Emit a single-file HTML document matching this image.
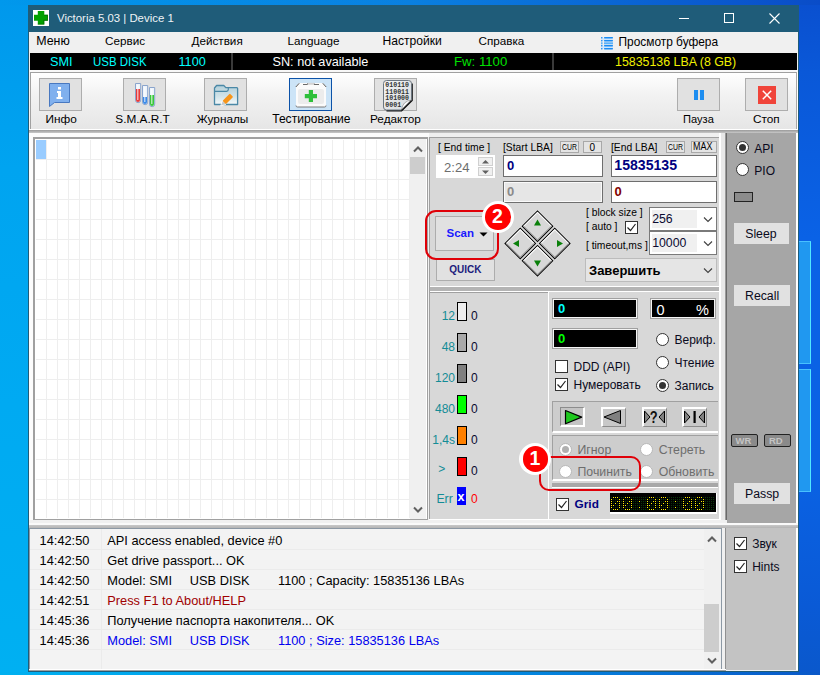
<!DOCTYPE html>
<html><head><meta charset="utf-8">
<style>
*{box-sizing:border-box;margin:0;padding:0}
html,body{width:820px;height:675px;overflow:hidden}
body{position:relative;font-family:"Liberation Sans",sans-serif;background:linear-gradient(180deg,rgba(0,10,60,0.07) 0%,rgba(0,10,60,0) 50%,rgba(255,255,255,0.03) 100%),linear-gradient(90deg,#00a6f0 0%,#0a8ce4 50%,#0a5ad6 97%,#0a52cc 100%)}
.a{position:absolute}
.t{position:absolute;white-space:pre;line-height:1}
#desk-b{left:0;top:0;width:820px;height:675px;background:linear-gradient(180deg,rgba(0,0,0,0) 0%,rgba(0,0,0,0) 100%)}
.logo{position:absolute;background:#2098f0;border:1px solid #48c0ff;border-right:1px solid #50e8ff}
#win{left:28px;top:5px;width:771px;height:667px;background:#1f5c79}
#client{left:29px;top:32px;width:769px;height:639px;background:#f0f0f0}
.btn{position:absolute;background:#e1e1e1;border:1px solid #adadad}
.blk{position:absolute;background:#000}
</style></head><body>
<!-- desktop -->
<div class="a" style="left:0;top:0;width:28px;height:675px;background:linear-gradient(180deg,#0098ec 0%,#00a4f0 25%,#00aaf2 60%,#00b0f2 100%)"></div>
<div class="a" style="left:0;top:0;width:820px;height:5px;background:linear-gradient(90deg,#0098ec 0%,#0a80e0 50%,#0a4cc8 100%)"></div>
<div class="a" style="left:0;top:672px;width:820px;height:3px;background:linear-gradient(90deg,#00b0f0 0%,#0098e8 50%,#0a58c8 100%)"></div>
<div class="a" style="left:798px;top:5px;width:22px;height:667px;background:linear-gradient(180deg,#0a50d0 0%,#0a58d8 10%,#0a62e6 35%,#0a62e4 70%,#0a5ad6 90%,#0a58cc 100%)"></div>
<!-- desktop logo panels -->
<div class="logo" style="left:798px;top:241px;width:13px;height:123px"></div>
<div class="logo" style="left:798px;top:369px;width:13px;height:123px"></div>

<div id="win" class="a"></div>
<!-- title bar -->
<div class="a" style="left:33px;top:10px;width:16px;height:16px;background:#fff"></div>
<svg class="a" style="left:33px;top:10px" width="16" height="16" viewBox="0 0 16 16"><path d="M4.8 1h6.5v3.8h3.6v5.9h-3.6v3.9H4.8v-3.9H1V4.8h3.8z" fill="#00a000"/><path d="M11.3 4.8h3.6v5.9h-3.6v3.9H4.8v-0.9h5.6v-3.9h3.6V5.7h-2.7z" fill="#006000" opacity=".7"/></svg>
<div class="t" style="left:57px;top:13px;font-size:11.4px;color:#eef3f6">Victoria 5.03 | Device 1</div>
<div class="a" style="left:679px;top:18px;width:10px;height:1px;background:#fff"></div>
<div class="a" style="left:724px;top:13px;width:10px;height:10px;border:1px solid #fff"></div>
<svg class="a" style="left:769px;top:13px" width="11" height="11" viewBox="0 0 11 11"><path d="M0.5 0.5L10.5 10.5M10.5 0.5L0.5 10.5" stroke="#fff" stroke-width="1.1"/></svg>

<div id="client" class="a"></div>
<!-- menu -->
<div class="t" style="left:36.2px;top:34.5px;font-size:12.4px;color:#000">Меню</div>
<div class="t" style="left:105px;top:35.1px;font-size:11.7px;color:#000">Сервис</div>
<div class="t" style="left:191.5px;top:35.1px;font-size:11.7px;color:#000">Действия</div>
<div class="t" style="left:287.5px;top:35.1px;font-size:11.7px;color:#000">Language</div>
<div class="t" style="left:382.5px;top:34.9px;font-size:12.1px;color:#000">Настройки</div>
<div class="t" style="left:478.5px;top:35.1px;font-size:11.7px;color:#000">Справка</div>
<svg class="a" style="left:600px;top:36px" width="14" height="14" viewBox="0 0 14 14"><g fill="#cfe6fc"><rect x="1" y="2" width="12" height="2.5"/><rect x="1" y="10" width="12" height="2.5"/></g><g fill="#1a8cf4"><rect x="1" y="1" width="1.6" height="1.4" rx=".6"/><rect x="4" y="1" width="9" height="1.4" rx=".6"/><rect x="1" y="4" width="1.6" height="1.4" rx=".6"/><rect x="4" y="4" width="9" height="1.4" rx=".6"/><rect x="1" y="9" width="1.6" height="1.4" rx=".6"/><rect x="4" y="9" width="9" height="1.4" rx=".6"/><rect x="1" y="12" width="1.6" height="1.4" rx=".6"/><rect x="4" y="12" width="9" height="1.4" rx=".6"/></g><g fill="#5cb2fa"><rect x="1" y="6.3" width="1.6" height="2"/><rect x="4" y="6.3" width="9" height="2"/></g></svg>
<div class="t" style="left:618.5px;top:36.9px;font-size:11.9px;color:#000">Просмотр буфера</div>
<!-- info bar -->
<div class="blk" style="left:30px;top:53px;width:767px;height:17px"></div>
<div class="a" style="left:231px;top:53px;width:2px;height:17px;background:#3a3a3a"></div>
<div class="a" style="left:552px;top:53px;width:2px;height:17px;background:#3a3a3a"></div>
<div class="t" style="left:50px;top:56px;font-size:12.7px;color:#00ffff">SMI</div>
<div class="t" style="left:92.5px;top:56px;font-size:12.7px;color:#00ffff;display:inline-block;transform:scaleX(0.905);transform-origin:0 0">USB DISK</div>
<div class="t" style="left:178.5px;top:56px;font-size:12.7px;color:#00ffff">1100</div>
<div class="t" style="left:272.5px;top:56px;font-size:12.7px;color:#fff">SN: not available</div>
<div class="t" style="left:454px;top:54.8px;font-size:13.2px;color:#00e000">Fw: 1100</div>
<div class="t" style="left:615px;top:56.2px;font-size:12.4px;color:#f0f000">15835136 LBA (8 GB)</div>
<!-- toolbar -->
<div class="a" style="left:29px;top:70px;width:769px;height:2px;background:#f8f8f8"></div>
<div class="a" style="left:29px;top:72px;width:769px;height:1px;background:#a0a0a0"></div>
<div class="a" style="left:30px;top:73px;width:767px;height:56px;background:linear-gradient(180deg,#ffffff 0%,#f2f2f2 40%,#e6e6e6 100%);border-left:1px solid #fff"></div>
<div class="a" style="left:29px;top:72px;width:1px;height:57px;background:#f4f4f4"></div><div class="a" style="left:30px;top:72px;width:1px;height:57px;background:#a0a0a0"></div>
<div class="a" style="left:796px;top:72px;width:1px;height:58px;background:#a8a8a8"></div>
<div class="a" style="left:797px;top:72px;width:1px;height:58px;background:#fff"></div>
<div class="a" style="left:29px;top:129px;width:769px;height:1px;background:#fff"></div>
<div class="a" style="left:29px;top:130px;width:769px;height:3px;background:linear-gradient(180deg,#9a9a9a,#c8c8c8)"></div>

<div class="btn" style="left:39px;top:78px;width:43px;height:33px"></div>
<div class="btn" style="left:123px;top:78px;width:43px;height:33px"></div>
<div class="btn" style="left:204px;top:78px;width:43px;height:33px"></div>
<div class="btn" style="left:289px;top:78px;width:43px;height:33px;background:#cce4f7;border:1px solid #0b52a8"></div>
<div class="btn" style="left:374px;top:78px;width:43px;height:33px"></div>
<div class="btn" style="left:677px;top:78px;width:43px;height:33px"></div>
<div class="btn" style="left:745px;top:78px;width:43px;height:33px"></div>

<div class="t" style="left:45.6px;top:113.7px;font-size:11.8px;color:#000">Инфо</div>
<div class="t" style="left:115.3px;top:113.7px;font-size:11.8px;color:#000">S.M.A.R.T</div>
<div class="t" style="left:196.8px;top:113.7px;font-size:11.8px;color:#000">Журналы</div>
<div class="t" style="left:272.2px;top:113.45px;font-size:12.1px;color:#000">Тестирование</div>
<div class="t" style="left:370px;top:113.7px;font-size:11.8px;color:#000">Редактор</div>
<div class="t" style="left:683px;top:114.3px;font-size:11.1px;color:#000">Пауза</div>
<div class="t" style="left:753px;top:113.7px;font-size:11.8px;color:#000">Стоп</div>
<!--ICONS-->
<svg class="a" style="left:48px;top:82px" width="24" height="25" viewBox="0 0 24 25"><path d="M1.5 1.5h20v19h-15l-5 4z" fill="#80b0ee" stroke="#4878c0" stroke-width="1"/><rect x="10" y="5" width="3" height="2.5" fill="#fff"/><path d="M9 9h4v6h1.5v2h-6v-2H10v-4H9z" fill="#fff"/></svg>
<svg class="a" style="left:134px;top:82px" width="22" height="26" viewBox="0 0 22 26"><g stroke="#8aa4cc" stroke-width="1"><path d="M1.5 1.5h5.2v16.6a2.6 2.6 0 0 1-5.2 0z" fill="#eef4fb"/><path d="M8.5 3.5h5.2v16.6a2.6 2.6 0 0 1-5.2 0z" fill="#eef4fb"/><path d="M15.5 5.5h5.2v16.6a2.6 2.6 0 0 1-5.2 0z" fill="#eef4fb"/></g><path d="M2 7h4v11a2 2 0 0 1-4 0z" fill="#e83a3a"/><path d="M9 15h4v5a2 2 0 0 1-4 0z" fill="#3a8ae8"/><path d="M16 13h4v9a2 2 0 0 1-4 0z" fill="#3ac83a"/><rect x="3" y="3" width="1.5" height="15" fill="#fff" opacity=".6"/><rect x="10" y="5" width="1.5" height="15" fill="#fff" opacity=".6"/><rect x="17" y="7" width="1.5" height="15" fill="#fff" opacity=".6"/></svg>
<svg class="a" style="left:213px;top:84px" width="26" height="25" viewBox="0 0 26 25"><defs><linearGradient id="fdg" x1="0" y1="0" x2="0" y2="1"><stop offset="0" stop-color="#b4d0da"/><stop offset="0.55" stop-color="#cfe2e8"/><stop offset="1" stop-color="#f4f9fa"/></linearGradient></defs><path d="M1.5 20.5V4L3.6 1.5H10.8L12.8 3.6H24L24.6 4.4V20.5Z" fill="url(#fdg)" stroke="#4a88a6" stroke-width="1.3" stroke-linejoin="round"/><path d="M1.5 7.3H13.6Q15.3 7.3 15.3 5.6V3.6" fill="none" stroke="#4a88a6" stroke-width="1.2"/><g transform="translate(13.6,16.1) rotate(-45)"><rect x="-3.5" y="-2.4" width="10.5" height="4.8" rx="1" fill="#f7951a"/><path d="M-3.5 -2.4L-7.8 0L-3.5 2.4z" fill="#c8c8c8"/><path d="M-3.5 -2.6L-8.3 0L-3.5 2.6" fill="none" stroke="#fff" stroke-width=".8"/></g></svg>
<svg class="a" style="left:295px;top:82px" width="32" height="26" viewBox="0 0 32 26"><path d="M4 1h24l3 3v20l-1 1H2l-1-1V4z" fill="#fbfbfb"/><rect x="3" y="7" width="26" height="15" rx="2" fill="#ececec"/><path d="M0.8 5L4.2 1.3M31.2 5L27.8 1.3" stroke="#555" stroke-width="1"/><path d="M8 2.5h4.6V1.2M19 1.2v1.3h5" fill="none" stroke="#6a6a6a" stroke-width="1"/><rect x="12.8" y="0.8" width="6" height="2" fill="#d4d4d4"/><path d="M1 23.5q0 1.5 1.5 1.5h27q1.5 0 1.5-1.5" fill="none" stroke="#7a7a7a" stroke-width="1"/><path d="M13.8 8h4.2v4h4v4.2h-4v3.8h-4.2v-3.8h-4V12h4z" fill="#2fc03a"/></svg>
<svg class="a" style="left:381px;top:79px" width="34" height="34" viewBox="0 0 34 34"><defs><linearGradient id="edg" x1="0" y1="0" x2="1" y2="1"><stop offset="0" stop-color="#f4f4f4"/><stop offset="1" stop-color="#d4d8dc"/></linearGradient></defs><path d="M31 4.5v17L20.5 31.8H5.5" fill="none" stroke="#111" stroke-width="1.6"/><path d="M5.5 1.5h22q3 0 3 3v16.5l-10 10h-15q-3 0-3-3v-23.5q0-3 3-3z" fill="url(#edg)" stroke="#6c7680" stroke-width="1"/><g font-family="Liberation Mono" font-weight="bold" font-size="6.6" fill="#333"><text x="4.3" y="8.3">010110</text><text x="4.3" y="14.7">110011</text><text x="4.3" y="21.1">101000</text><text x="4.3" y="27.5">0001</text></g><path d="M20.5 31q1-9 10-10" fill="#fafafa" stroke="#9a9a9a" stroke-width=".8"/><path d="M20.5 31.5l10-10" stroke="#222" stroke-width="1.2"/></svg>
<div class="a" style="left:694px;top:90px;width:4px;height:10px;background:#1e8ef0"></div>
<div class="a" style="left:700px;top:90px;width:4px;height:10px;background:#1e8ef0"></div>
<div class="a" style="left:758px;top:86px;width:18px;height:18px;background:#f0443a"></div>
<svg class="a" style="left:758px;top:86px" width="18" height="18" viewBox="0 0 18 18"><path d="M4.8 4.8l8.4 8.4M13.2 4.8l-8.4 8.4" stroke="#fff" stroke-width="1.5"/></svg>
<!--MAIN-->
<!-- graph -->
<div class="a" style="left:29px;top:133px;width:400px;height:4px;background:#fcfcfc"></div>
<div class="a" style="left:29px;top:133px;width:4px;height:390px;background:#fcfcfc"></div>
<div class="a" style="left:33px;top:137px;width:395px;height:383px;background:#fff;border-top:2px solid #a0a0a0;border-left:2px solid #a0a0a0;border-right:1px solid #a0a0a0;border-bottom:1px solid #a0a0a0"></div>
<div class="a" style="left:36px;top:140px;width:374px;height:378px;background-color:#fff;background-image:repeating-linear-gradient(90deg,transparent 0,transparent 10px,#eeeeee 10px,#eeeeee 11px),repeating-linear-gradient(180deg,transparent 0,transparent 19px,#eeeeee 19px,#eeeeee 20px)"></div>
<div class="a" style="left:36px;top:140px;width:10px;height:19px;background:#99ccff"></div>
<div class="a" style="left:410px;top:139px;width:16px;height:380px;background:#f0f0f0"></div>
<div class="a" style="left:410px;top:157px;width:15px;height:17px;background:#cdcdcd"></div>
<svg class="a" style="left:413px;top:145px" width="10" height="8" viewBox="0 0 10 8"><path d="M1 6.5L5 2.5L9 6.5" fill="none" stroke="#606060" stroke-width="2"/></svg>
<svg class="a" style="left:413px;top:506px" width="10" height="8" viewBox="0 0 10 8"><path d="M1 1.5L5 5.5L9 1.5" fill="none" stroke="#606060" stroke-width="2"/></svg>
<!-- middle column -->
<div class="a" style="left:429px;top:137px;width:290px;height:382px;background:#d8d8d8;border-top:1px solid #a0a0a0;border-left:1px solid #a0a0a0"></div>
<div class="a" style="left:429px;top:519px;width:292px;height:1px;background:#fff"></div>
<div class="a" style="left:719px;top:133px;width:2px;height:390px;background:#fff"></div>
<div class="a" style="left:721px;top:133px;width:4px;height:390px;background:#e8e8e8"></div>
<div class="a" style="left:725px;top:133px;width:1px;height:390px;background:#9a9a9a"></div>
<div class="a" style="left:726px;top:133px;width:1px;height:390px;background:#6a6a6a"></div>
<div class="a" style="left:430px;top:286px;width:289px;height:1px;background:#fff"></div>
<div class="a" style="left:430px;top:287px;width:289px;height:4px;background:#b4b4b4"></div>
<div class="a" style="left:430px;top:291px;width:289px;height:1px;background:#fff"></div>
<div class="a" style="left:430px;top:292px;width:118px;height:1px;background:#a0a0a0"></div>
<div class="a" style="left:548px;top:292px;width:1px;height:228px;background:#fff"></div>

<div class="t" style="left:438px;top:143.2px;font-size:10.3px;color:#000">[ End time ]</div>
<div class="a" style="left:436px;top:155px;width:59px;height:23px;background:#fff"></div>
<div class="t" style="left:444px;top:161.4px;font-size:13.1px;color:#6d6d6d">2:24</div>
<div class="a" style="left:478px;top:157px;width:15px;height:9px;background:#f0f0f0;border:1px solid #d0d0d0"></div>
<div class="a" style="left:478px;top:167px;width:15px;height:9px;background:#f0f0f0;border:1px solid #d0d0d0"></div>
<svg class="a" style="left:481px;top:159px" width="9" height="16" viewBox="0 0 9 16"><path d="M1 4.5h7L4.5 1z" fill="#606060"/><path d="M1 11.5h7L4.5 15z" fill="#606060"/></svg>

<div class="t" style="left:503px;top:143.2px;font-size:10.3px;color:#000">[Start LBA]</div>
<div class="a" style="left:560px;top:141px;width:19px;height:12px;background:#e4e4e4;border:1px solid #a8a8a8"></div>
<div class="t" style="left:561.8px;top:143.4px;font-size:8.6px;color:#000;transform:scaleX(0.8);transform-origin:0 0">CUR</div>
<div class="a" style="left:583px;top:141px;width:19px;height:12px;background:#e4e4e4;border:1px solid #a8a8a8"></div>
<div class="t" style="left:589.6px;top:142.6px;font-size:10px;color:#000">0</div>
<div class="t" style="left:611px;top:143.2px;font-size:10.3px;color:#000">[End LBA]</div>
<div class="a" style="left:666px;top:141px;width:19px;height:12px;background:#e4e4e4;border:1px solid #a8a8a8"></div>
<div class="t" style="left:667.8px;top:143.4px;font-size:8.6px;color:#000;transform:scaleX(0.8);transform-origin:0 0">CUR</div>
<div class="a" style="left:691px;top:141px;width:26px;height:12px;background:#e4e4e4;border:1px solid #a8a8a8"></div>
<div class="t" style="left:693.3px;top:142.4px;font-size:10.4px;color:#000;transform:scaleX(0.86);transform-origin:0 0">MAX</div>

<div class="a" style="left:503px;top:155px;width:100px;height:22px;background:#fff;border:1px solid #6e6e6e"></div>
<div class="t" style="left:507px;top:159px;font-size:13px;font-weight:bold;color:#000080">0</div>
<div class="a" style="left:611px;top:155px;width:106px;height:22px;background:#fff;border:1px solid #6e6e6e"></div>
<div class="t" style="left:614.3px;top:158.3px;font-size:14.1px;font-weight:bold;color:#000080">15835135</div>
<div class="a" style="left:503px;top:181px;width:100px;height:22px;background:#e6e6e6;border:1px solid #6e6e6e;box-shadow:inset 0 0 0 1px #fafafa"></div>
<div class="t" style="left:507px;top:185.4px;font-size:13px;font-weight:bold;color:#8a8a8a">0</div>
<div class="a" style="left:611px;top:181px;width:106px;height:22px;background:#fff;border:1px solid #6e6e6e"></div>
<div class="t" style="left:614.5px;top:185.4px;font-size:13px;font-weight:bold;color:#800000">0</div>

<div class="btn" style="left:435px;top:216px;width:59px;height:35px"></div>
<div class="t" style="left:446.5px;top:228.3px;font-size:11.5px;font-weight:bold;color:#1a1aff">Scan</div>
<svg class="a" style="left:479px;top:232px" width="9" height="5" viewBox="0 0 9 5"><path d="M0.5 0.5h8L4.5 4.5z" fill="#000"/></svg>
<div class="btn" style="left:436px;top:259px;width:59px;height:22px"></div>
<div class="t" style="left:449.3px;top:265.1px;font-size:10px;font-weight:bold;color:#1c1c7c">QUICK</div>
<svg class="a" style="left:500px;top:206px" width="76" height="76" viewBox="0 0 76 76">
<g transform="translate(37.5,37.5) rotate(45)">
<g stroke="#000" stroke-width="1" fill="#d8d8d8">
<rect x="-23" y="-23" width="21.6" height="21.6"/><rect x="1.4" y="-23" width="21.6" height="21.6"/><rect x="-23" y="1.4" width="21.6" height="21.6"/><rect x="1.4" y="1.4" width="21.6" height="21.6"/>
</g>
<g stroke="#fff" stroke-width="1" fill="none">
<path d="M-22 -2.4V-22H-2.4"/><path d="M2.4 -2.4V-22H22"/><path d="M-22 22V2.4H-2.4"/><path d="M2.4 22V2.4H22"/>
</g>
<g stroke="#909090" stroke-width="1" fill="none">
<path d="M-2.4 -22V-2.4H-22"/><path d="M22 -22V-2.4H2.4"/><path d="M-2.4 2.4V22H-22"/><path d="M22 2.4V22H2.4"/>
</g>
</g>
<g fill="#0a800a"><path d="M37.5 13.5l3.5 6h-7z"/><path d="M13 37.5l6-3.5v7z"/><path d="M63 37.5l-6-3.5v7z"/><path d="M37.5 60.5l3.5-6h-7z"/></g>
</svg>
<!-- annotation 2 -->
<div class="a" style="left:424.8px;top:210px;width:74px;height:49.5px;border:2px solid #e00008;border-radius:11px"></div>
<div class="a" style="left:482px;top:201px;width:32px;height:32px;border-radius:50%;background:#fff"></div>
<div class="a" style="left:485.25px;top:204.25px;width:25.5px;height:25.5px;border-radius:50%;background:#ff0000"></div>
<div class="t" style="left:492px;top:207.2px;font-size:19.5px;font-weight:bold;color:#fff">2</div>

<div class="t" style="left:586px;top:208.3px;font-size:10.3px;color:#000">[ block size ]</div>
<div class="t" style="left:586px;top:222.3px;font-size:10.3px;color:#000">[ auto ]</div>
<div class="t" style="left:586px;top:240.8px;font-size:10.3px;color:#000">[ timeout,ms ]</div>
<div class="a" style="left:625px;top:221px;width:13px;height:13px;background:#fff;border:1px solid #333"></div>
<svg class="a" style="left:625px;top:221px" width="13" height="13" viewBox="0 0 13 13"><path d="M2.5 6.5l3 3 5-6.5" fill="none" stroke="#222" stroke-width="1.2"/></svg>
<div class="a" style="left:649px;top:207px;width:68px;height:24px;background:#fff;border:1px solid #7a7a7a"></div>
<div class="a" style="left:652px;top:210px;width:45px;height:18px;background:#f0f0f0"></div>
<div class="t" style="left:652.2px;top:212.5px;font-size:12.3px;color:#0a0a30">256</div>
<svg class="a" style="left:703px;top:216px" width="10" height="7" viewBox="0 0 10 7"><path d="M1 1.5l4 4 4-4" fill="none" stroke="#404040" stroke-width="1.1"/></svg>
<div class="a" style="left:649px;top:231px;width:68px;height:24px;background:#fff;border:1px solid #7a7a7a"></div>
<div class="a" style="left:652px;top:234px;width:45px;height:18px;background:#f0f0f0"></div>
<div class="t" style="left:652.2px;top:237px;font-size:12.3px;color:#0a0a30">10000</div>
<svg class="a" style="left:703px;top:240px" width="10" height="7" viewBox="0 0 10 7"><path d="M1 1.5l4 4 4-4" fill="none" stroke="#404040" stroke-width="1.1"/></svg>
<div class="a" style="left:585px;top:258px;width:132px;height:24px;background:#e5e5e5;border:1px solid #bcbcbc"></div>
<div class="t" style="left:589px;top:264.2px;font-size:13px;font-weight:bold;color:#000">Завершить</div>
<svg class="a" style="left:703px;top:267px" width="10" height="7" viewBox="0 0 10 7"><path d="M1 1.5l4 4 4-4" fill="none" stroke="#404040" stroke-width="1.1"/></svg>
<!--LOWER-->
<div class="a" style="left:457px;top:302px;width:10px;height:19px;background:#eeeeee;border:1px solid #000"></div>
<div class="t" style="right:365px;top:309.84px;font-size:12px;color:#138c96">12</div>
<div class="t" style="left:471px;top:309.84px;font-size:12px;color:#0a0a30">0</div>
<div class="a" style="left:457px;top:333px;width:10px;height:19px;background:#a9a9a9;border:1px solid #000"></div>
<div class="t" style="right:365px;top:340.84px;font-size:12px;color:#138c96">48</div>
<div class="t" style="left:471px;top:340.84px;font-size:12px;color:#0a0a30">0</div>
<div class="a" style="left:457px;top:364px;width:10px;height:19px;background:#808080;border:1px solid #000"></div>
<div class="t" style="right:365px;top:371.84px;font-size:12px;color:#138c96">120</div>
<div class="t" style="left:471px;top:371.84px;font-size:12px;color:#0a0a30">0</div>
<div class="a" style="left:457px;top:395px;width:10px;height:19px;background:#00ff00;border:1px solid #000"></div>
<div class="t" style="right:365px;top:402.84px;font-size:12px;color:#138c96">480</div>
<div class="t" style="left:471px;top:402.84px;font-size:12px;color:#0a0a30">0</div>
<div class="a" style="left:457px;top:426px;width:10px;height:19px;background:#ff8000;border:1px solid #000"></div>
<div class="t" style="right:365px;top:433.84px;font-size:12px;color:#138c96">1,4s</div>
<div class="t" style="left:471px;top:433.84px;font-size:12px;color:#0a0a30">0</div>
<div class="a" style="left:457px;top:457px;width:10px;height:19px;background:#ff0000;border:1px solid #000"></div>
<div class="t" style="left:438.3px;top:463.3px;font-size:12px;color:#138c96">&gt;</div>
<div class="t" style="left:471px;top:464.84px;font-size:12px;color:#0a0a30">0</div>
<div class="a" style="left:457px;top:487px;width:9px;height:18px;background:#0000ff"></div>
<div class="t" style="left:457.5px;top:491.42px;font-size:12.5px;font-weight:bold;color:#fff">x</div>
<div class="t" style="left:436.4px;top:492.6px;font-size:12.3px;color:#138c96">Err</div>
<div class="t" style="left:471px;top:492.84px;font-size:12px;color:#ff0000">0</div>
<div class="a" style="left:552px;top:298px;width:86px;height:21px;background:#000;border:1px solid #a0a0a0;box-shadow:inset 0 0 0 1px #f4f4f4"></div>
<div class="t" style="left:558px;top:302.0px;font-size:13px;font-weight:bold;color:#00ffff">0</div>
<div class="a" style="left:650px;top:298px;width:66px;height:21px;background:#000;border:1px solid #a0a0a0;box-shadow:inset 0 0 0 1px #f4f4f4"></div>
<div class="t" style="left:656.5px;top:302.73px;font-size:14.5px;color:#fff">0</div>
<div class="t" style="left:696px;top:302.73px;font-size:14.5px;color:#fff">%</div>
<div class="a" style="left:552px;top:328px;width:86px;height:21px;background:#000;border:1px solid #a0a0a0;box-shadow:inset 0 0 0 1px #f4f4f4"></div>
<div class="t" style="left:558px;top:332.0px;font-size:13px;font-weight:bold;color:#00ff00">0</div>
<div class="a" style="left:555px;top:360px;width:13px;height:13px;background:#fff;border:1px solid #333"></div>
<div class="t" style="left:573.5px;top:361.24px;font-size:12px;color:#0a0a20">DDD (API)</div>
<div class="a" style="left:555px;top:378px;width:13px;height:13px;background:#fff;border:1px solid #333"></div><svg class="a" style="left:555px;top:378px" width="13" height="13" viewBox="0 0 13 13"><path d="M2.5 6.5l3 3 5-6.5" fill="none" stroke="#222" stroke-width="1.2"/></svg>
<div class="t" style="left:573.5px;top:379.14px;font-size:12px;color:#0a0a20">Нумеровать</div>
<div class="a" style="left:656px;top:333px;width:13px;height:13px;border-radius:50%;background:#fff;border:1px solid #333"></div>
<div class="t" style="left:674.5px;top:333.84px;font-size:12px;color:#0a0a20">Вериф.</div>
<div class="a" style="left:656px;top:356px;width:13px;height:13px;border-radius:50%;background:#fff;border:1px solid #333"></div>
<div class="t" style="left:674.5px;top:356.84px;font-size:12px;color:#0a0a20">Чтение</div>
<div class="a" style="left:656px;top:379px;width:13px;height:13px;border-radius:50%;background:#fff;border:1px solid #333"></div><div class="a" style="left:659px;top:382px;width:7px;height:7px;border-radius:50%;background:#333"></div>
<div class="t" style="left:674.5px;top:379.84px;font-size:12px;color:#0a0a20">Запись</div>
<div class="a" style="left:552px;top:401px;width:166px;height:32px;background:#cdcdcd;border-top:1px solid #a0a0a0;border-left:1px solid #a0a0a0;border-bottom:2px solid #fff"></div>
<div class="a" style="left:560px;top:407px;width:25px;height:20px;background:#c4c4c4;border:1px solid #8c8c8c;border-right:2px solid #fff;border-bottom:2px solid #fff"></div>
<div class="a" style="left:601px;top:407px;width:25px;height:20px;background:#c8c8c8;border:2px solid #fff;border-right:1px solid #8c8c8c;border-bottom:1px solid #8c8c8c"></div>
<div class="a" style="left:642px;top:407px;width:25px;height:20px;background:#c8c8c8;border:2px solid #fff;border-right:1px solid #8c8c8c;border-bottom:1px solid #8c8c8c"></div>
<div class="a" style="left:682px;top:407px;width:25px;height:20px;background:#c8c8c8;border:2px solid #fff;border-right:1px solid #8c8c8c;border-bottom:1px solid #8c8c8c"></div>
<svg class="a" style="left:560px;top:407px" width="25" height="20" viewBox="0 0 25 20"><path d="M5.5 3.5v13.2l16.2-6.6z" fill="#1ec81e" stroke="#000" stroke-width="1.2" stroke-linejoin="round"/></svg>
<svg class="a" style="left:601px;top:407px" width="25" height="20" viewBox="0 0 25 20"><path d="M19.5 3.5v13L3 10z" fill="#808080" stroke="#000" stroke-width="1" stroke-linejoin="round"/></svg>
<svg class="a" style="left:642px;top:407px" width="25" height="20" viewBox="0 0 25 20"><path d="M2.5 4v12l5.5-6z" fill="#808080" stroke="#000" stroke-width="1"/><path d="M22.5 4v12l-5.5-6z" fill="#808080" stroke="#000" stroke-width="1"/><text x="0" y="0" font-family="Liberation Sans" font-weight="bold" font-size="16.5" fill="#111" transform="translate(7.7,16) scale(0.78,1)">?</text></svg>
<svg class="a" style="left:682px;top:407px" width="25" height="20" viewBox="0 0 25 20"><path d="M2.5 4v12l5.5-6z" fill="#808080" stroke="#000" stroke-width="1"/><path d="M22.5 4v12l-5.5-6z" fill="#808080" stroke="#000" stroke-width="1"/><rect x="11.5" y="4" width="2.2" height="12" fill="#000"/></svg>
<div class="a" style="left:552px;top:435px;width:166px;height:46px;background:#cdcdcd;border-top:1px solid #a0a0a0;border-left:1px solid #a0a0a0;border-bottom:2px solid #fff"></div>
<div class="a" style="left:559px;top:443px;width:13px;height:13px;border-radius:50%;background:#fff;border:1px solid #b8b8b8"></div><div class="a" style="left:562px;top:446px;width:7px;height:7px;border-radius:50%;background:#b0b0b0"></div>
<div class="t" style="left:577.5px;top:443.89px;font-size:12.3px;color:#6d6d6d">Игнор</div>
<div class="a" style="left:559px;top:465px;width:13px;height:13px;border-radius:50%;background:#fff;border:1px solid #b8b8b8"></div>
<div class="t" style="left:577.5px;top:465.59px;font-size:12.3px;color:#6d6d6d">Починить</div>
<div class="a" style="left:640px;top:443px;width:13px;height:13px;border-radius:50%;background:#fff;border:1px solid #b8b8b8"></div>
<div class="t" style="left:658.7px;top:443.89px;font-size:12.3px;color:#6d6d6d">Стереть</div>
<div class="a" style="left:640px;top:465px;width:13px;height:13px;border-radius:50%;background:#fff;border:1px solid #b8b8b8"></div>
<div class="t" style="left:658.7px;top:465.59px;font-size:12.3px;color:#6d6d6d">Обновить</div>
<div class="a" style="left:552px;top:483px;width:166px;height:5px;background:#a8a8a8;border-bottom:1px solid #fff"></div>
<div class="a" style="left:556px;top:498px;width:13px;height:13px;background:#fff;border:1px solid #333"></div><svg class="a" style="left:556px;top:498px" width="13" height="13" viewBox="0 0 13 13"><path d="M2.5 6.5l3 3 5-6.5" fill="none" stroke="#222" stroke-width="1.2"/></svg>
<div class="t" style="left:574.6px;top:498.62px;font-size:11.8px;font-weight:bold;color:#000080">Grid</div>
<div class="a" style="left:610px;top:493px;width:107px;height:21px;background:#fff"></div><svg class="a" style="left:610px;top:493px" width="106" height="19" viewBox="0 0 106 19" shape-rendering="crispEdges"><defs><pattern id="ledp" x="1" y="4" width="2" height="2" patternUnits="userSpaceOnUse"><rect x="0" y="0" width="1" height="1" fill="#0a380a"/></pattern></defs><rect width="106" height="19" fill="#000"/><rect x="1" y="4" width="104" height="13" fill="url(#ledp)"/><g fill="#ffee00"><rect x="1" y="6" width="1" height="1"/><rect x="1" y="8" width="1" height="1"/><rect x="1" y="10" width="1" height="1"/><rect x="1" y="12" width="1" height="1"/><rect x="1" y="14" width="1" height="1"/><rect x="3" y="4" width="1" height="1"/><rect x="3" y="12" width="1" height="1"/><rect x="3" y="16" width="1" height="1"/><rect x="5" y="4" width="1" height="1"/><rect x="5" y="10" width="1" height="1"/><rect x="5" y="16" width="1" height="1"/><rect x="7" y="4" width="1" height="1"/><rect x="7" y="8" width="1" height="1"/><rect x="7" y="16" width="1" height="1"/><rect x="9" y="6" width="1" height="1"/><rect x="9" y="8" width="1" height="1"/><rect x="9" y="10" width="1" height="1"/><rect x="9" y="12" width="1" height="1"/><rect x="9" y="14" width="1" height="1"/><rect x="13" y="6" width="1" height="1"/><rect x="13" y="8" width="1" height="1"/><rect x="13" y="10" width="1" height="1"/><rect x="13" y="12" width="1" height="1"/><rect x="13" y="14" width="1" height="1"/><rect x="15" y="4" width="1" height="1"/><rect x="15" y="12" width="1" height="1"/><rect x="15" y="16" width="1" height="1"/><rect x="17" y="4" width="1" height="1"/><rect x="17" y="10" width="1" height="1"/><rect x="17" y="16" width="1" height="1"/><rect x="19" y="4" width="1" height="1"/><rect x="19" y="8" width="1" height="1"/><rect x="19" y="16" width="1" height="1"/><rect x="21" y="6" width="1" height="1"/><rect x="21" y="8" width="1" height="1"/><rect x="21" y="10" width="1" height="1"/><rect x="21" y="12" width="1" height="1"/><rect x="21" y="14" width="1" height="1"/><rect x="29" y="8" width="1" height="1"/><rect x="29" y="14" width="1" height="1"/><rect x="37" y="6" width="1" height="1"/><rect x="37" y="8" width="1" height="1"/><rect x="37" y="10" width="1" height="1"/><rect x="37" y="12" width="1" height="1"/><rect x="37" y="14" width="1" height="1"/><rect x="39" y="4" width="1" height="1"/><rect x="39" y="12" width="1" height="1"/><rect x="39" y="16" width="1" height="1"/><rect x="41" y="4" width="1" height="1"/><rect x="41" y="10" width="1" height="1"/><rect x="41" y="16" width="1" height="1"/><rect x="43" y="4" width="1" height="1"/><rect x="43" y="8" width="1" height="1"/><rect x="43" y="16" width="1" height="1"/><rect x="45" y="6" width="1" height="1"/><rect x="45" y="8" width="1" height="1"/><rect x="45" y="10" width="1" height="1"/><rect x="45" y="12" width="1" height="1"/><rect x="45" y="14" width="1" height="1"/><rect x="49" y="6" width="1" height="1"/><rect x="49" y="8" width="1" height="1"/><rect x="49" y="10" width="1" height="1"/><rect x="49" y="12" width="1" height="1"/><rect x="49" y="14" width="1" height="1"/><rect x="51" y="4" width="1" height="1"/><rect x="51" y="12" width="1" height="1"/><rect x="51" y="16" width="1" height="1"/><rect x="53" y="4" width="1" height="1"/><rect x="53" y="10" width="1" height="1"/><rect x="53" y="16" width="1" height="1"/><rect x="55" y="4" width="1" height="1"/><rect x="55" y="8" width="1" height="1"/><rect x="55" y="16" width="1" height="1"/><rect x="57" y="6" width="1" height="1"/><rect x="57" y="8" width="1" height="1"/><rect x="57" y="10" width="1" height="1"/><rect x="57" y="12" width="1" height="1"/><rect x="57" y="14" width="1" height="1"/><rect x="65" y="8" width="1" height="1"/><rect x="65" y="14" width="1" height="1"/><rect x="73" y="6" width="1" height="1"/><rect x="73" y="8" width="1" height="1"/><rect x="73" y="10" width="1" height="1"/><rect x="73" y="12" width="1" height="1"/><rect x="73" y="14" width="1" height="1"/><rect x="75" y="4" width="1" height="1"/><rect x="75" y="12" width="1" height="1"/><rect x="75" y="16" width="1" height="1"/><rect x="77" y="4" width="1" height="1"/><rect x="77" y="10" width="1" height="1"/><rect x="77" y="16" width="1" height="1"/><rect x="79" y="4" width="1" height="1"/><rect x="79" y="8" width="1" height="1"/><rect x="79" y="16" width="1" height="1"/><rect x="81" y="6" width="1" height="1"/><rect x="81" y="8" width="1" height="1"/><rect x="81" y="10" width="1" height="1"/><rect x="81" y="12" width="1" height="1"/><rect x="81" y="14" width="1" height="1"/><rect x="85" y="6" width="1" height="1"/><rect x="85" y="8" width="1" height="1"/><rect x="85" y="10" width="1" height="1"/><rect x="85" y="12" width="1" height="1"/><rect x="85" y="14" width="1" height="1"/><rect x="87" y="4" width="1" height="1"/><rect x="87" y="12" width="1" height="1"/><rect x="87" y="16" width="1" height="1"/><rect x="89" y="4" width="1" height="1"/><rect x="89" y="10" width="1" height="1"/><rect x="89" y="16" width="1" height="1"/><rect x="91" y="4" width="1" height="1"/><rect x="91" y="8" width="1" height="1"/><rect x="91" y="16" width="1" height="1"/><rect x="93" y="6" width="1" height="1"/><rect x="93" y="8" width="1" height="1"/><rect x="93" y="10" width="1" height="1"/><rect x="93" y="12" width="1" height="1"/><rect x="93" y="14" width="1" height="1"/></g></svg>
<div class="a" style="left:539px;top:456px;width:101.5px;height:35px;border:2px solid #e00008;border-radius:10px"></div>
<div class="a" style="left:519.3px;top:443px;width:32px;height:32px;border-radius:50%;background:#fff"></div>
<div class="a" style="left:522.55px;top:446.25px;width:25.5px;height:25.5px;border-radius:50%;background:#ff0000"></div>
<div class="t" style="left:529.5px;top:449.19px;font-size:19.5px;font-weight:bold;color:#fff">1</div>
<!--RIGHT-->
<div class="a" style="left:727px;top:133px;width:69px;height:390px;background:#a6a6a6"></div>
<div class="a" style="left:796px;top:133px;width:2px;height:390px;background:#fff"></div>
<div class="a" style="left:736px;top:141px;width:13px;height:13px;border-radius:50%;background:#fff;border:1px solid #333"></div><div class="a" style="left:739px;top:144px;width:7px;height:7px;border-radius:50%;background:#333"></div>
<div class="t" style="left:754.3px;top:142.84px;font-size:12px;color:#0a0a20">API</div>
<div class="a" style="left:736px;top:163px;width:13px;height:13px;border-radius:50%;background:#fff;border:1px solid #333"></div>
<div class="t" style="left:754.3px;top:164.84px;font-size:12px;color:#0a0a20">PIO</div>
<div class="a" style="left:734px;top:192px;width:19px;height:10px;background:#8c8c8c;border:1px solid #222"></div>
<div class="a" style="left:734px;top:223px;width:55px;height:21px;background:#e1e1e1"></div><div class="t" style="left:745.2px;top:227.59px;font-size:12.3px;color:#0a0a20">Sleep</div>
<div class="a" style="left:734px;top:285px;width:56px;height:21px;background:#e1e1e1"></div><div class="t" style="left:745px;top:289.59px;font-size:12.3px;color:#0a0a20">Recall</div>
<div class="a" style="left:734px;top:483px;width:56px;height:21px;background:#e1e1e1"></div><div class="t" style="left:745px;top:487.59px;font-size:12.3px;color:#0a0a20">Passp</div>
<div class="a" style="left:731px;top:434px;width:27px;height:13px;background:#8a8a8a;border:1px solid #222;border-radius:2px"></div>
<div class="t" style="left:735.5px;top:436.46px;font-size:9.5px;font-weight:bold;color:#c4c4c4">WR</div>
<div class="a" style="left:764px;top:434px;width:27px;height:13px;background:#8a8a8a;border:1px solid #222;border-radius:2px"></div>
<div class="t" style="left:769px;top:436.46px;font-size:9.5px;font-weight:bold;color:#c4c4c4">RD</div>
<div class="a" style="left:29px;top:520px;width:698px;height:3px;background:#f0f0f0"></div>
<div class="a" style="left:29px;top:523px;width:769px;height:2px;background:#fafafa"></div>
<div class="a" style="left:29px;top:525px;width:769px;height:3px;background:linear-gradient(180deg,#c8c8c8,#b4b4b4)"></div>
<div class="a" style="left:29px;top:528px;width:693px;height:1px;background:#8c98a4"></div>
<div class="a" style="left:29px;top:529px;width:693px;height:141px;background:#f3f3f3;border-right:1px solid #8c98a4;border-left:1px solid #8c98a4"></div>
<div class="a" style="left:30px;top:549px;width:674px;height:1px;background:#ebebeb"></div>
<div class="a" style="left:30px;top:569px;width:674px;height:1px;background:#ebebeb"></div>
<div class="a" style="left:30px;top:589px;width:674px;height:1px;background:#ebebeb"></div>
<div class="a" style="left:30px;top:609px;width:674px;height:1px;background:#ebebeb"></div>
<div class="a" style="left:30px;top:629px;width:674px;height:1px;background:#ebebeb"></div>
<div class="a" style="left:30px;top:649px;width:674px;height:1px;background:#ebebeb"></div>
<div class="a" style="left:101px;top:529px;width:1px;height:140px;background:#ebebeb"></div>
<div class="t" style="left:39.6px;top:535.16px;font-size:12.8px;color:#000">14:42:50</div>
<div class="t" style="left:107.3px;top:535.16px;font-size:12.8px;color:#000">API access enabled, device #0</div>
<div class="t" style="left:39.6px;top:555.16px;font-size:12.8px;color:#000">14:42:50</div>
<div class="t" style="left:107.3px;top:555.16px;font-size:12.8px;color:#000">Get drive passport... OK</div>
<div class="t" style="left:39.6px;top:575.16px;font-size:12.8px;color:#000">14:42:50</div>
<div class="t" style="left:107.3px;top:575.16px;font-size:12.8px;color:#000">Model: SMI&#160;&#160;&#160;&#160;&#160;USB DISK&#160;&#160;&#160;&#160;&#160;&#160;&#160;&#160;1100 ; Capacity: 15835136 LBAs</div>
<div class="t" style="left:39.6px;top:595.16px;font-size:12.8px;color:#000">14:42:51</div>
<div class="t" style="left:107.3px;top:595.16px;font-size:12.8px;color:#a00000">Press F1 to About/HELP</div>
<div class="t" style="left:39.6px;top:615.16px;font-size:12.8px;color:#000">14:45:36</div>
<div class="t" style="left:107.3px;top:615.16px;font-size:12.8px;color:#000">Получение паспорта накопителя... OK</div>
<div class="t" style="left:39.6px;top:635.16px;font-size:12.8px;color:#000">14:45:36</div>
<div class="t" style="left:107.3px;top:635.16px;font-size:12.8px;color:#0000ee">Model: SMI&#160;&#160;&#160;&#160;&#160;USB DISK&#160;&#160;&#160;&#160;&#160;&#160;&#160;&#160;1100 ; Size: 15835136 LBAs</div>
<div class="a" style="left:704px;top:529px;width:17px;height:140px;background:#f0f0f0"></div>
<div class="a" style="left:704px;top:604px;width:15px;height:48px;background:#cdcdcd"></div>
<svg class="a" style="left:707px;top:535px" width="10" height="8" viewBox="0 0 10 8"><path d="M1 6.5L5 2.5L9 6.5" fill="none" stroke="#606060" stroke-width="2"/></svg>
<svg class="a" style="left:707px;top:657px" width="10" height="8" viewBox="0 0 10 8"><path d="M1 1.5L5 5.5L9 1.5" fill="none" stroke="#606060" stroke-width="2"/></svg>
<div class="a" style="left:722px;top:528px;width:4px;height:142px;background:#f0f0f0"></div>
<div class="a" style="left:725px;top:528px;width:73px;height:142px;background:#c3c3c3;border-left:1px solid #909090;border-right:2px solid #fff"></div>
<div class="a" style="left:734px;top:537px;width:13px;height:13px;background:#fff;border:1px solid #333"></div><svg class="a" style="left:734px;top:537px" width="13" height="13" viewBox="0 0 13 13"><path d="M2.5 6.5l3 3 5-6.5" fill="none" stroke="#222" stroke-width="1.2"/></svg>
<div class="t" style="left:752.2px;top:537.54px;font-size:12px;color:#0a0a20">Звук</div>
<div class="a" style="left:734px;top:560px;width:13px;height:13px;background:#fff;border:1px solid #333"></div><svg class="a" style="left:734px;top:560px" width="13" height="13" viewBox="0 0 13 13"><path d="M2.5 6.5l3 3 5-6.5" fill="none" stroke="#222" stroke-width="1.2"/></svg>
<div class="t" style="left:752.2px;top:560.54px;font-size:12px;color:#0a0a20">Hints</div>
<div class="a" style="left:29px;top:669px;width:697px;height:1px;background:#fff"></div>
<div class="a" style="left:29px;top:670px;width:697px;height:1px;background:#a0a0a0"></div>
<!--END-->
</body></html>
